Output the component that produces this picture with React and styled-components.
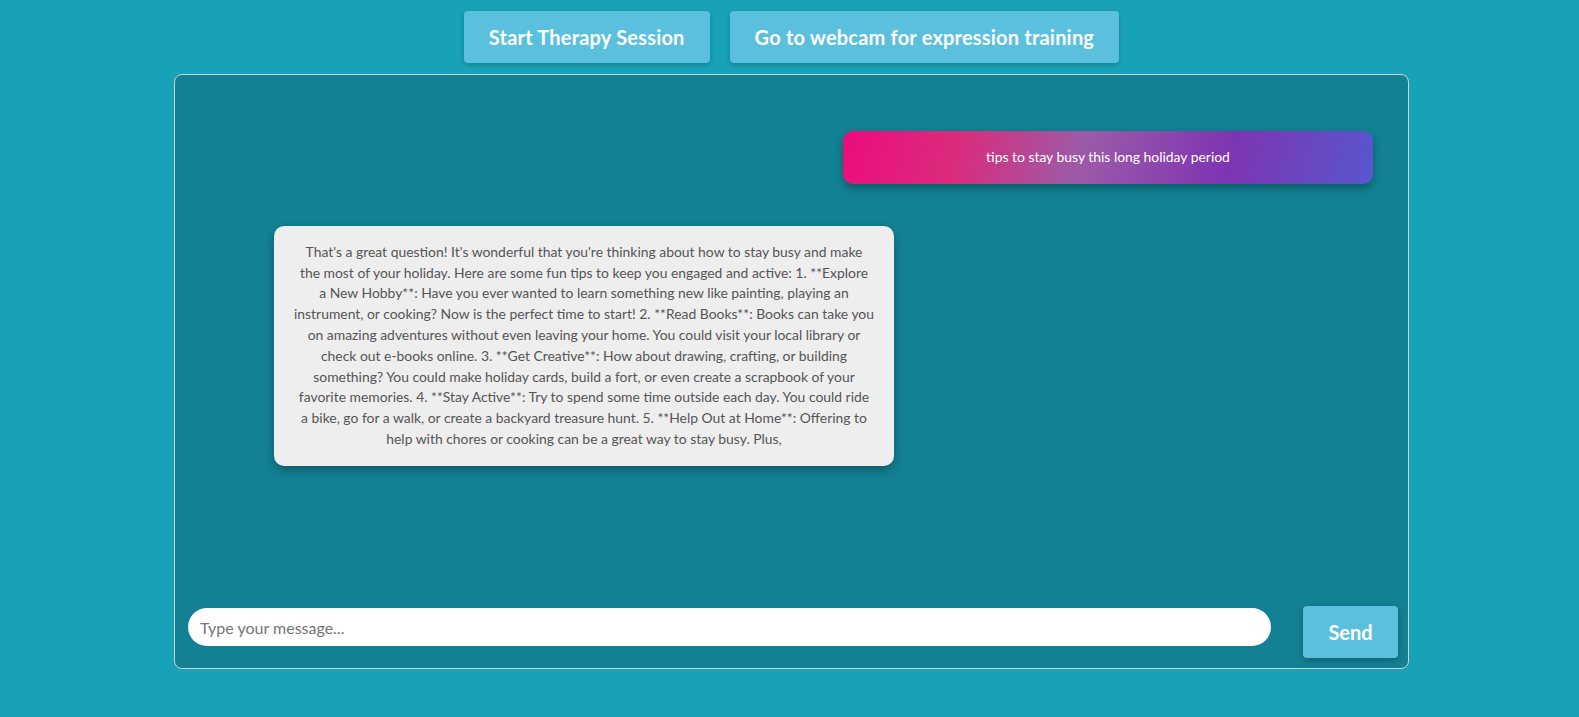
import React, { useState } from 'react';
import styled, { createGlobalStyle } from 'styled-components';

const GlobalStyle = createGlobalStyle`
    body {
        margin: 0;
        background-color: #17a2b8;
        font-family: Lato, "Open Sans", sans-serif;
    }
`;

// the non-breaking space after "1. **Explore a" keeps the wrap of the original
const botReply = "That's a great question! It's wonderful that you're thinking about how to stay busy and make the most of your holiday. Here are some fun tips to keep you engaged and active: 1. **Explore a\u00a0New Hobby**: Have you ever wanted to learn something new like painting, playing an instrument, or cooking? Now is the perfect time to start! 2. **Read Books**: Books can take you on amazing adventures without even leaving your home. You could visit your local library or check out e-books online. 3. **Get Creative**: How about drawing, crafting, or building something? You could make holiday cards, build a fort, or even create a scrapbook of your favorite memories. 4. **Stay Active**: Try to spend some time outside each day. You could ride a bike, go for a walk, or create a backyard treasure hunt. 5. **Help Out at Home**: Offering to help with chores or cooking can be a great way to stay busy. Plus,";

const messages = [
    { from: 'user', text: 'tips to stay busy this long holiday period' },
    { from: 'bot', text: botReply },
];

const App = () => {
    const [input, setInput] = useState('');

    return (
        <>
            <GlobalStyle />
            <Page>
                <TopBar>
                    <ActionButton>Start Therapy Session</ActionButton>
                    <ActionButton>Go to webcam for expression training</ActionButton>
                </TopBar>

                <ChatBox>
                    <MessageList>
                        {
                            messages.map((m, i) => (
                                <Bubble key={i} from={m.from}>{m.text}</Bubble>
                            ))
                        }
                    </MessageList>

                    <InputRow>
                        <MessageInput
                            placeholder="Type your message..."
                            value={input}
                            onChange={e => setInput(e.target.value)}
                        />
                        <SendButton>Send</SendButton>
                    </InputRow>
                </ChatBox>
            </Page>
        </>
    )
}

export default App;

const Page = styled.div`
    display: flex;
    flex-direction: column;
    align-items: center;
    padding: 11px 0 0 4px;
    min-height: 717px;
    box-sizing: border-box;
`;

const TopBar = styled.div`
    display: flex;
    gap: 20px;
    margin-bottom: 11px;
`;

const ActionButton = styled.button`
    height: 52px;
    padding: 0 25px;
    border: none;
    border-radius: 4px;
    background-color: #5bc0de;
    color: #fff;
    font-family: inherit;
    font-size: 20px;
    font-weight: 700;
    letter-spacing: 0.2px;
    box-shadow: 0 2px 5px rgba(0, 0, 0, 0.2);
    cursor: pointer;
`;

const ChatBox = styled.div`
    width: 1235px;
    height: 595px;
    box-sizing: border-box;
    border: 1px solid #d0d0d0;
    border-radius: 8px;
    background-color: rgba(0, 0, 0, 0.2);

    display: flex;
    flex-direction: column;
`;

const MessageList = styled.div`
    flex: 1;
    display: flex;
    flex-direction: column;
    padding-top: 56px;
    gap: 42px;
`;

const Bubble = styled.div`
    box-sizing: border-box;
    padding: 16px 20px;
    border-radius: 10px;
    font-size: 13.9px;
    line-height: 20.8px;
    text-align: center;
    box-shadow: 0 4px 8px rgba(0, 0, 0, 0.3);

    align-self: ${p => p.from === 'user' ? 'flex-end' : 'flex-start'};
    width: ${p => p.from === 'user' ? '530px' : '620px'};
    margin: ${p => p.from === 'user' ? '0 35px 0 0' : '0 0 0 99px'};
    color: ${p => p.from === 'user' ? '#fff' : '#555'};
    background: ${p => p.from === 'user'
        ? 'linear-gradient(105deg, #ec0c7d 0%, #da2c7b 22%, #9c5ba8 45%, #7e35b2 72%, #5857cf 100%)'
        : '#eeeeee'};
`;

const InputRow = styled.div`
    display: flex;
    align-items: flex-start;
    gap: 32px;
    padding: 0 10px 10px 13px;
`;

const MessageInput = styled.input`
    flex: 1;
    height: 38px;
    margin-top: 2px;
    box-sizing: border-box;
    padding: 0 12px;
    border: none;
    border-radius: 20px;
    background-color: #fff;
    font-family: inherit;
    font-size: 16px;
    color: #333;
    outline: none;

    ::placeholder {
        color: #555;
    }
`;

const SendButton = styled.button`
    width: 95px;
    height: 52px;
    border: none;
    border-radius: 4px;
    background-color: #5bc0de;
    color: #fff;
    font-family: inherit;
    font-size: 20px;
    font-weight: 700;
    box-shadow: 0 2px 6px rgba(0, 0, 0, 0.25);
    cursor: pointer;
`;
